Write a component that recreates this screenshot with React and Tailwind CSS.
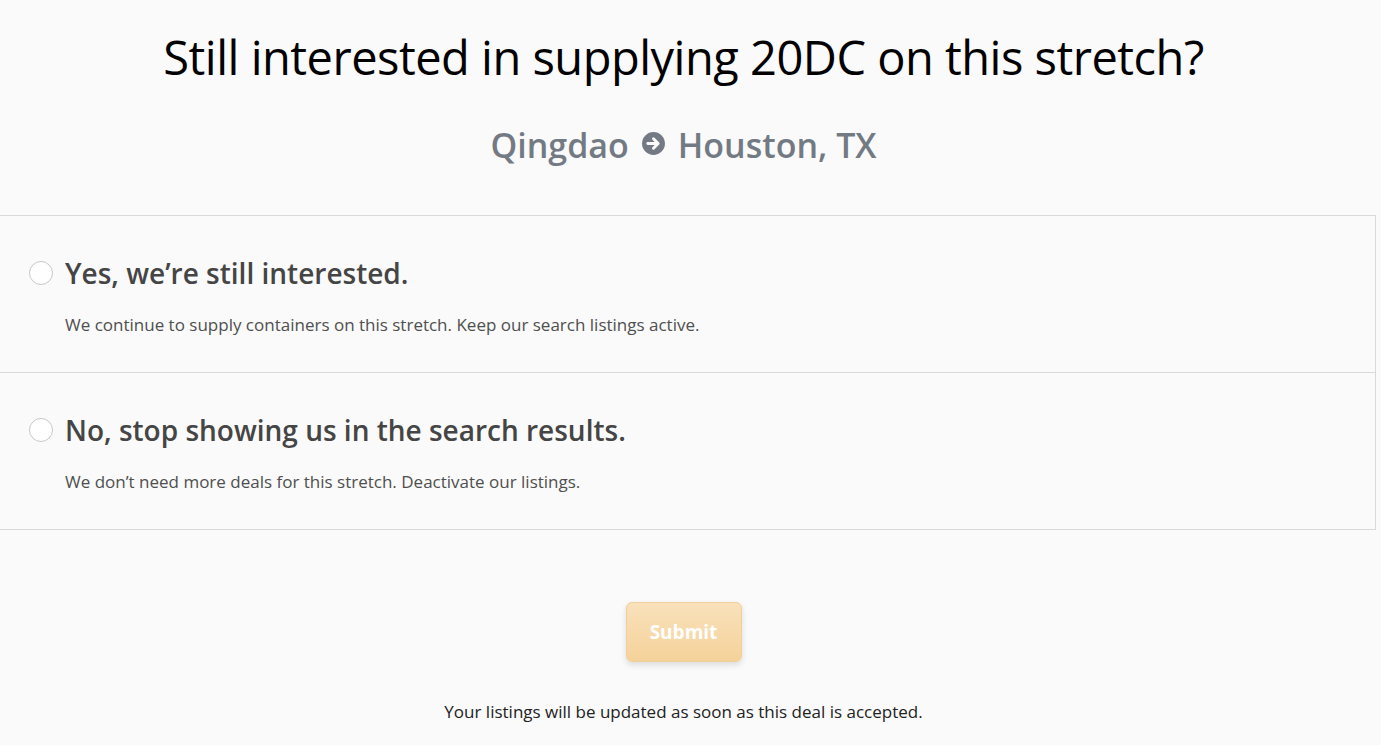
import React, { useState } from 'react'

const OPTIONS = [
  {
    id: 'yes',
    title: 'Yes, we’re still interested.',
    desc: 'We continue to supply containers on this stretch. Keep our search listings active.',
  },
  {
    id: 'no',
    title: 'No, stop showing us in the search results.',
    desc: 'We don’t need more deals for this stretch. Deactivate our listings.',
  },
]

function ArrowCircle() {
  return (
    <svg width="25" height="25" viewBox="0 0 24 24" className="mx-[12px] mt-[-4px]">
      <circle cx="12" cy="12" r="11" fill="#737a84" />
      <path d="M6.5 12h9M12 7.5l4.5 4.5-4.5 4.5" stroke="#fafafa" strokeWidth="2.8" fill="none" strokeLinecap="round" strokeLinejoin="round" />
    </svg>
  )
}

export default function App() {
  const [choice, setChoice] = useState(null)

  return (
    <div className="min-h-[745px] bg-[#fafafa] text-[#222]" style={{ fontFamily: '"Open Sans", "Noto Sans", sans-serif' }}>
      <div className="w-[1367px]">
        <h1 className="pt-[22px] text-center text-[47px] leading-[70px] text-black tracking-[-0.5px]">
          Still interested in supplying 20DC on this stretch?
        </h1>
        <div className="mt-[28px] flex items-center justify-center text-[34px] font-semibold text-[#737a84] leading-[50px]">
          <span>Qingdao</span>
          <ArrowCircle />
          <span>Houston, TX</span>
        </div>
      </div>

      <div className="mt-[45px] w-[1376px] border-t border-r border-b border-[#d9d9d9]">
        {OPTIONS.map((o, i) => (
          <label
            key={o.id}
            className={'flex cursor-pointer gap-[12px] pl-[29px] pt-[39px] ' + (i > 0 ? 'h-[157px] border-t border-[#d9d9d9]' : 'h-[156px]')}
            onClick={() => setChoice(o.id)}
          >
            <span className="mt-[6px] flex h-[24px] w-[24px] shrink-0 items-center justify-center rounded-full border border-[#c8c8c8] bg-white">
              {choice === o.id && <span className="h-[12px] w-[12px] rounded-full bg-[#737a84]" />}
            </span>
            <div>
              <div className="text-[28px] font-semibold leading-[36px] text-[#454545]">{o.title}</div>
              <div className="mt-[22px] text-[17px] leading-[24px] text-[#4f4f4f]">{o.desc}</div>
            </div>
          </label>
        ))}
      </div>

      <div className="w-[1367px]">
        <div className="mt-[72px] flex justify-center">
          <button
            disabled={!choice}
            className="h-[60px] w-[116px] rounded-[6px] border border-[#efcf9c] bg-gradient-to-b from-[#f9e1bb] to-[#f5d29a] text-[19px] font-bold text-white shadow-[0_3px_6px_rgba(0,0,0,0.12)]"
          >
            Submit
          </button>
        </div>
        <p className="mt-[38px] text-center text-[17px] leading-[24px] text-[#222]">
          Your listings will be updated as soon as this deal is accepted.
        </p>
      </div>
    </div>
  )
}
